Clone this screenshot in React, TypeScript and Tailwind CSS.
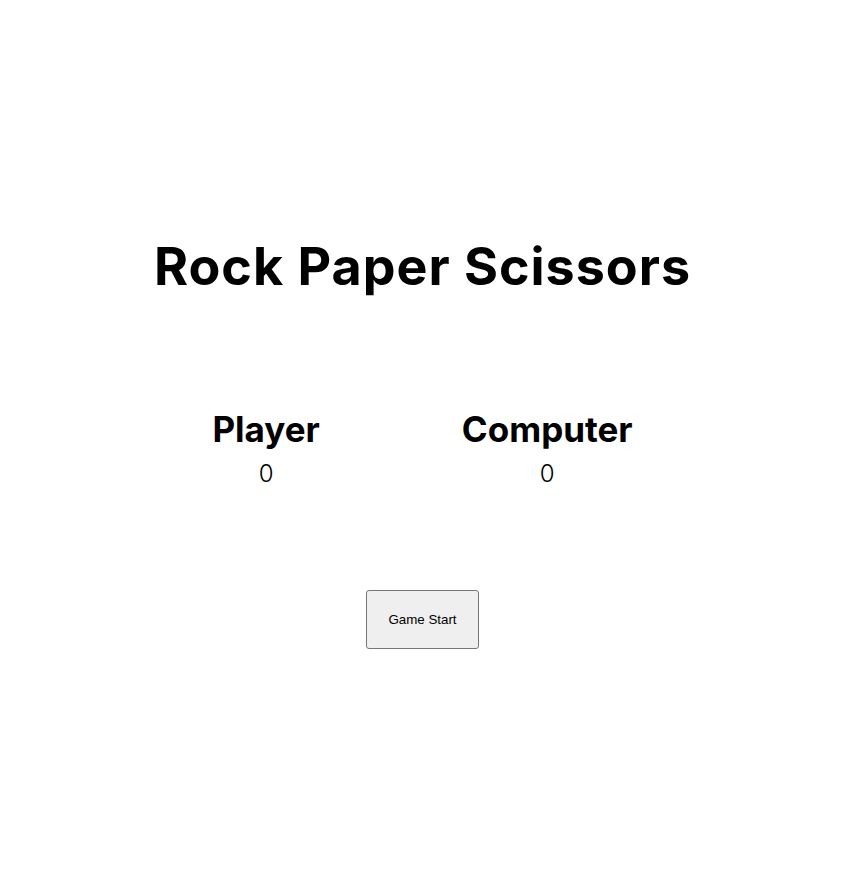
import React from "react";

export default function App() {
  return (
    <div className="min-h-[882px] w-full bg-white text-black flex flex-col items-center">
      <h1 className="mt-[237px] text-[52px] leading-[60px] font-bold font-['Inter',sans-serif] tracking-[1px]">
        Rock Paper Scissors
      </h1>
      <div className="mt-[112px] flex gap-[142px]">
        <div className="flex flex-col items-center">
          <h2 className="text-[35px] leading-[40px] font-bold font-['Inter',sans-serif]">Player</h2>
          <p className="mt-[10px] text-[24px] leading-[30px] font-light font-['Inter',sans-serif]">0</p>
        </div>
        <div className="flex flex-col items-center">
          <h2 className="text-[35px] leading-[40px] font-bold font-['Inter',sans-serif]">Computer</h2>
          <p className="mt-[10px] text-[24px] leading-[30px] font-light font-['Inter',sans-serif]">0</p>
        </div>
      </div>
      <button
        type="button"
        className="mt-[101px] h-[59px] w-[113px] bg-[#efefef] border border-[#767676] rounded-[3px] text-[13.33px] text-black font-['Liberation_Sans',Arial,sans-serif]"
      >
        Game Start
      </button>
    </div>
  );
}
